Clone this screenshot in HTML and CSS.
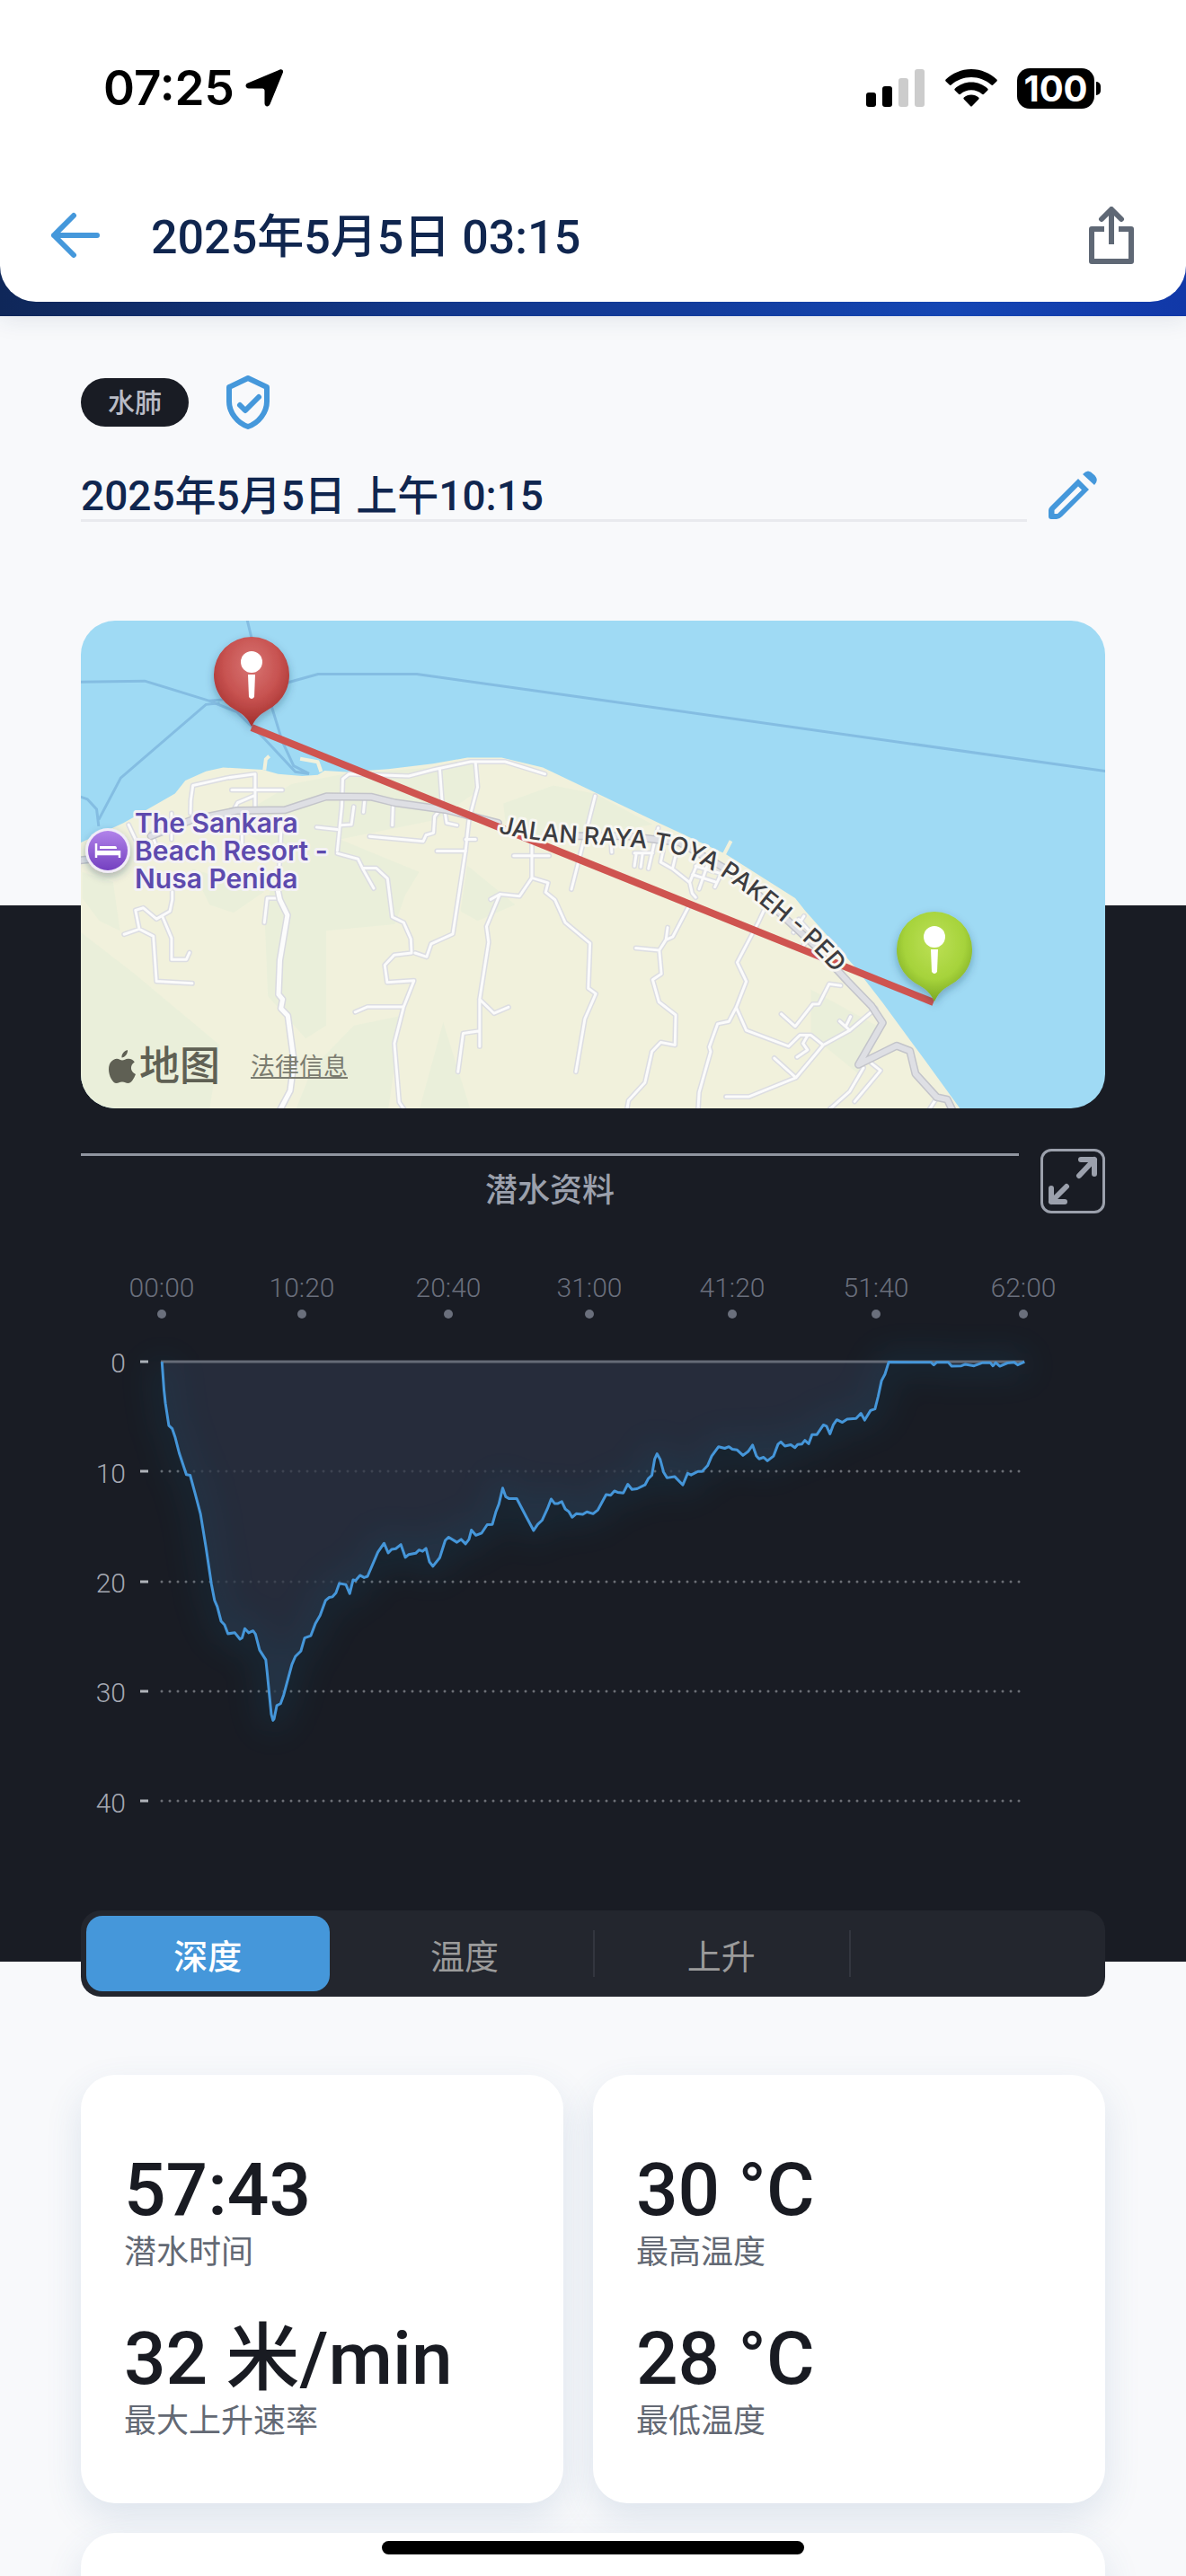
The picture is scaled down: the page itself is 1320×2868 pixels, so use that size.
FILE: index.html
```html
<!DOCTYPE html>
<html lang="zh-CN">
<head>
  <meta charset="UTF-8" />
  <meta name="viewport" content="width=device-width, initial-scale=1.0" />
  <title>2025年5月5日 03:15</title>
  <link rel="stylesheet" href="styles.css">
</head>
<body>
  <div class="hero">
    <header class="header">
      <div class="status-bar">
        <div class="status-left">
          <span class="clock">07:25</span>
          <svg width="42" height="42" viewBox="0 0 42 42"><path d="M38 .8 C40.500 -.6 42.800 1.200 41.800 4 L27.500 39 C26 42.600 21.500 42 21.500 38 V24 C21.500 22.500 20.500 21.500 19 21.500 H4 C0 21.500 -.8 17 2.800 15.500 Z"/></svg>
        </div>
        <div class="status-right">
          <svg width="66" height="42" viewBox="0 0 66 42">
            <rect x="0" y="26" width="11" height="16" rx="3"/>
            <rect x="18" y="19" width="11" height="23" rx="3"/>
            <rect x="36" y="10" width="11" height="32" rx="3" fill="#ccc"/>
            <rect x="54" y="0" width="11" height="42" rx="3" fill="#ccc"/>
          </svg>
          <svg width="58" height="42" viewBox="0 0 58 42">
            <path d="M29 0 C40 0 50 4.500 57.400 11.500 Q58.200 12.500 57.400 13.400 L53.200 17.600 Q52.200 18.300 51.300 17.500 C45 12 37.500 9 29 9 C20.500 9 13 12 6.700 17.500 Q5.800 18.300 4.800 17.600 L.6 13.400 Q-.2 12.500 .6 11.500 C8 4.500 18 0 29 0Z"/>
            <path d="M29 14.500 C36 14.500 42.500 17.200 47.300 21.700 Q48.200 22.700 47.300 23.600 L43 27.800 Q42 28.600 41 27.700 C37.700 24.900 33.500 23.300 29 23.300 C24.500 23.300 20.300 24.900 17 27.700 Q16 28.600 15 27.800 L10.700 23.600 Q9.800 22.700 10.700 21.700 C15.500 17.200 22 14.500 29 14.500Z"/>
            <path d="M29 28.500 C32 28.500 35 29.700 37.200 31.600 Q38.200 32.500 37.200 33.500 L30 41 Q29 42 28 41 L20.800 33.500 Q19.800 32.500 20.800 31.600 C23 29.700 26 28.500 29 28.500Z"/>
          </svg>
          <div class="battery"><span>100</span></div>
        </div>
      </div>
      <div class="nav">
        <button class="icon-button" aria-label="返回">
          <svg width="56" height="52" viewBox="0 0 56 52" fill="none" stroke="#4598db" stroke-width="6" stroke-linecap="round" stroke-linejoin="round"><path d="M26 4 L4 26 L26 48 M4 26 H52"/></svg>
        </button>
        <h1>2025年5月5日 03:15</h1>
        <button class="icon-button share" aria-label="分享">
          <svg width="50" height="64" viewBox="0 0 50 64" fill="none" stroke="#5f6875" stroke-width="6" stroke-linejoin="round"><path d="M17 25 H3 V61 H47 V25 H33 M25 42 V6"/><path d="M14 14 L25 3 L36 14" stroke-linecap="round"/></svg>
        </button>
      </div>
    </header>
  </div>

  <section class="details">
    <div class="tags">
      <span class="badge">水肺</span>
      <svg width="48" height="60" viewBox="0 0 48 60" fill="none" stroke="#4598db" stroke-width="6" stroke-linejoin="round" stroke-linecap="round"><path d="M24 3 L45 13 V29 C45 41 36 53 24 57 C12 53 3 41 3 29 V13 Z"/><path d="M15 33 L21 39 L36 24"/></svg>
    </div>
    <div class="title-row">
      <h2>2025年5月5日 上午10:15</h2>
      <button class="icon-button" aria-label="编辑">
        <svg width="54" height="54" viewBox="0 0 54 54"><path fill="#4598db" fill-rule="evenodd" d="M33 9 L45 21 L15 51 Q12 54 9 54 H3 Q0 54 0 51 V44 Q0 42 2 40 Z M33 17.500 L6.500 44 V48 H10 L37 21.500 Z"/><path fill="#4598db" d="M38 4 Q44 -3 50 4 Q57 10 51 16 Z"/></svg>
      </button>
    </div>
  </section>

  <section class="dive">
    <div class="map">
      <svg class="map-canvas" viewBox="0 0 1140 543" preserveAspectRatio="xMidYMid slice">
        <defs>
          <radialGradient id="redPin" cx="50%" cy="32%" r="62%"><stop offset="0" stop-color="#d87573"/><stop offset=".6" stop-color="#c75250"/><stop offset="1" stop-color="#a83432"/></radialGradient>
          <radialGradient id="greenPin" cx="50%" cy="35%" r="62%"><stop offset="0" stop-color="#bce056"/><stop offset=".65" stop-color="#a6d33b"/><stop offset="1" stop-color="#7fad25"/></radialGradient>
          <linearGradient id="hotel" x1="0" y1="0" x2="0" y2="1"><stop offset="0" stop-color="#b183ea"/><stop offset="1" stop-color="#7440c0"/></linearGradient>
          <filter id="shadow" x="-40%" y="-40%" width="180%" height="180%"><feDropShadow dx="0" dy="4" stdDeviation="5" flood-color="#1d3c55" flood-opacity=".35"/></filter>
          <path id="road" d="M464 236 C500 245 530 247 565 249 S640 252 669 262 S735 297 783 338 S830 382 870 430"/>
          <path id="pin" d="M0 -42 A42 42 0 0 1 42 0 C42 20 30 33 17 40 C8 45 4 50 0 58 C-4 50 -8 45 -17 40 C-30 33 -42 20 -42 0 A42 42 0 0 1 0 -42Z"/>
          <g id="lanes">
            <path d="M345 620 L346 580 L352 535 L450 512 L533 500 V610 M465 549 H612 M470 612 L482 588 L533 565"/>
            <path d="M772 735 L785 600 L788 515 L806 500 L980 506 L1050 487 L1160 462 L1260 462 L1376 500 M1174 465 L1180 540 L1155 640 L1145 735 L1108 990 L1045 1020 L1032 1060 L998 1048"/>
            <path d="M1070 485 L1078 600 L1055 630 L1052 680 L1030 687 L1022 706 L866 691 M852 575 L848 617 M934 600 L932 657 M820 600 L813 655 L782 657 M712 663 L772 670 M1085 615 L1090 650 L1120 657 M1145 700 H1174 M1062 736 H1145"/>
            <path d="M772 743 L832 760 L846 790 L878 850 M846 788 H885 L918 820 L932 938 L965 955 L986 1005 L988 1048 L938 1054 L910 1085 L917 1138 L995 1133 L965 1213 L938 1325 L952 1505 L968 1530 M824 1229 L860 1213 H962"/>
            <path d="M1338 700 V818 L1302 874 L1245 868 L1218 884 M1285 750 H1388 M1338 818 L1385 833 L1378 862 L1405 885 L1435 955 L1507 1018 L1502 1156 L1524 1173 L1492 1250 L1466 1412 M1245 868 L1206 967 L1212 1015 L1186 1190 V1334 M1186 1190 L1228 1233 L1270 1214 M1186 1287 L1138 1294 L1123 1412"/>
            <path d="M1522 567 L1453 853 M292 860 V885 L285 920 L246 944 L208 910 L185 917 L196 975 L152 991 M196 975 L237 997 L246 1135 L350 1141 M264 938 L290 1003 V1068 H333 L342 1047 M600 880 H568 L560 955 M165 655 L185 700 M232 680 L245 720 M290 620 V700 M495 630 V730 M610 640 L600 860"/>
            <g transform="translate(1463.500 0) scale(1.01667 1)">
              <path d="M238 665 L225 720 L210 790 M175 745 L170 782 M193 745 L188 785 M170 742 H222 M252 735 L245 770 L278 790 L328 832 M290 740 L280 785 M348 780 L328 832 L335 865 L345 878 M345 782 L418 805 L400 846 M336 808 L400 830 M380 775 L355 852 M104 720 L105 740"/>
              <path d="M328 900 L280 998 L260 1008 L241 1040 L174 1033 M265 970 L260 1008 M241 1040 L247 1112 L222 1130 L240 1198 L288 1238 L286 1330 L245 1322 L220 1350 L200 1445 L153 1500 L148 1530"/>
              <path d="M548 900 L524 955 L464 1077 L490 1135 L461 1215 L490 1285 L611 1334 L643 1300 H675 L710 1330 L632 1430 L570 1370 M632 1430 L498 1488 H432 M710 1330 L786 1285 L860 1218 M786 1285 L757 1257 M775 1272 L788 1243 M666 1300 L652 1325 L665 1345 L635 1367 M461 1215 L440 1258 L408 1265 L384 1336 L388 1350 L355 1475 L352 1530"/>
              <path d="M590 1235 L630 1273 L680 1205 L698 1204 L727 1143 L760 1148 M825 1400 L785 1473 L730 1525 M848 1386 L874 1408 L800 1503 M1035 1492 L1015 1525 M655 935 L625 985 M683 985 L650 1030 M640 945 L720 1040"/>
            </g>
          </g>
          <g id="major">
            <path d="M20 765 L100 755 M230 690 L350 640 L480 612 L620 610 L740 569 L870 570 L940 588 L1090 610 L1240 650"/>
            <path transform="translate(1463.500 0) scale(1.01667 1)" d="M0 690 L150 690 L300 710 L430 790 L560 900 L690 1030 L780 1135 L848 1210 L880 1262 L811 1390 L920 1332 L958 1348 L974 1418 L1035 1490 L1065 1497 L1080 1530"/>
          </g>
          <path id="south" d="M600 860 L605 885 L627 932 L605 1070 L601 1175 L613 1190 L608 1218 L628 1240 L646 1380 L635 1470 L605 1530"/>
        </defs>
        <rect width="1140" height="543" fill="#9fdaf4"/>
        <g transform="translate(-10 -11) scale(.38265 .36352)">
          <g class="ferry">
            <path d="M20 218 L212 215 L400 276 L440 272 M508 20 L523 85 M78 640 L142 512 L390 287 L430 283 M20 568 L45 577 L72 608 L78 660"/>
            <path d="M400 276 L480 310 L560 392 L650 493 L690 499 M580 290 L612 400 L645 475 L690 499 M620 222 L716 194 L1003 194 L1463 262 L3010 492"/>
          </g>
          <path fill="#f1f1dc" d="M20 713 L150 650 L180 632 L250 590 L300 560 L330 520 L390 492 L440 480 L555 487 L600 500 L670 506 L715 503 L735 490 L800 494 L920 485 L1050 468 L1150 450 L1250 450 L1370 480 L1463 527 L1707 650 L1901 745 L2104 880 L2134 920 L2277 1090 L2358 1200 L2480 1375 L2587 1530 H20Z"/>
          <g class="green">
            <path d="M640 530 L790 500 L1170 470 L1170 560 L1060 640 L780 700 L1010 800 L970 870 L940 960 L740 980 L740 1270 L680 1310 L570 1180 L560 920 L610 740 L450 650Z"/>
            <path d="M1255 590 L1400 535 L1520 560 L1690 655 L1600 670 L1350 700 L1260 640Z M30 800 L120 830 L140 980 L80 950 L30 880Z"/>
            <path d="M20 980 L180 1110 L430 1330 L400 1530 H20Z M820 1270 L960 1240 L920 1530 H650 L700 1400Z M1080 1260 L1160 1530 H1010Z M350 790 L560 860 L470 925 L400 900Z"/>
            <path d="M2150 1160 L2340 1270 L2290 1420 L2150 1300Z M1290 900 L1180 950 L1130 920 L1150 780Z"/>
          </g>
          <path class="jetty" d="M560 488 L564 455 L574 445 M664 453 L715 463 L725 493 M1895 750 L1917 705"/>
          <g class="roads">
            <use href="#lanes" class="lane-edge"/>
            <use href="#lanes" class="lane-fill"/>
            <use href="#major" class="major-edge"/>
            <use href="#major" class="major-fill"/>
            <use href="#south" class="south-edge"/>
            <use href="#south" class="south-fill"/>
          </g>
        </g>

        <path d="M190 119 L949 425" stroke="#cf5450" stroke-width="8"/>
        <text class="road-name"><textPath href="#road">JALAN RAYA TOYA PAKEH - PED</textPath></text>

        <g filter="url(#shadow)"><circle cx="30" cy="256" r="25" fill="#f1ecf8"/></g>
        <circle cx="30" cy="256" r="22" fill="url(#hotel)"/>
        <path d="M17 248 V264 M17 260 H43 M43 264 V256" stroke="#fff" stroke-width="2.500" fill="none"/>
        <path d="M18 256 H43 V260 H18Z M21 251 H38 Q40 251 40 254 H21Z" fill="#fff"/>
        <text class="place"><tspan x="60" y="236">The Sankara</tspan><tspan x="60" y="267">Beach Resort -</tspan><tspan x="60" y="298">Nusa Penida</tspan></text>

        <g transform="translate(190 60)">
          <use href="#pin" fill="url(#redPin)" filter="url(#shadow)"/>
          <circle cy="-14" r="12" fill="#fff"/><path d="M-4 0 H4 L3 25 Q0 29 -3 25Z" fill="#fff"/>
        </g>
        <g transform="translate(950 366)">
          <use href="#pin" fill="url(#greenPin)" filter="url(#shadow)"/>
          <circle cy="-14" r="12" fill="#fff"/><path d="M-4 0 H4 L3 25 Q0 29 -3 25Z" fill="#fff"/>
        </g>
      </svg>
      <div class="attribution">
        <svg width="30" height="38" viewBox="0 0 30 38" fill="#5f6054"><path d="M21 0 C21.500 4 18 8.500 14.500 8.500 C14 4.500 17.500 .8 21 0Z M15 11.500 C17 11.500 19 9.500 22 9.700 C25 9.800 27.500 11.200 28.800 13.500 C23 17 24 24.500 30 27 C28 32 25 37 21.500 37 C19 37 18 35.500 15 35.500 C12 35.500 11 37 8.500 37 C4.500 37 0 29 0 21.500 C0 14 4.500 10 9 9.700 C11.500 9.700 13.500 11.500 15 11.500Z"/></svg>
        <span>地图</span>
        <a href="#">法律信息</a>
      </div>
    </div>

    <div class="chart-header">
      <h3>潜水资料</h3>
      <button class="expand" aria-label="全屏">
        <svg width="56" height="56" viewBox="0 0 56 56" fill="none" stroke="#9ba0ac" stroke-width="6" stroke-linecap="round" stroke-linejoin="round"><path d="M35 22 L52 4 M37 4 H52 V20 M21 34 L4 51 M4 36 V51 H19"/></svg>
      </button>
    </div>

    <svg class="chart" viewBox="0 0 1140 660">
      <defs>
        <filter id="glow" x="-10%" y="-20%" width="120%" height="140%"><feGaussianBlur stdDeviation="45"/></filter>
        <path id="dive" d="M262 101 L268 190 L272 230 L282 300 L292 310 L300 335 L312 385 L333 453 L344 455 L358 510 L374 575 L390 680 L406 795 L415 845 L423 865 L434 910 L444 921 L454 949 L474 946 L489 966 L495 962 L503 933 L514 946 L527 940 L534 950 L546 1000 L564 1030 L568 1070 L580 1200 L585 1219 L588 1215 L596 1173 L607 1167 L616 1140 L640 1045 L650 1020 L666 1003 L677 962 L695 955 L708 918 L722 892 L738 845 L748 836 L758 834 L768 822 L778 792 L797 796 L808 824 L818 781 L825 783 L838 767 L850 774 L860 770 L890 695 L908 667 L920 697 L930 686 L942 684 L957 671 L970 711 L980 702 L1000 698 L1010 688 L1020 692 L1030 683 L1040 725 L1050 739 L1070 712 L1086 658 L1096 648 L1120 664 L1132 655 L1145 669 L1155 655 L1162 626 L1175 642 L1192 635 L1208 609 L1223 608 L1233 570 L1242 545 L1253 495 L1262 522 L1272 528 L1294 528 L1322 585 L1343 627 L1355 608 L1368 595 L1383 560 L1394 529 L1404 543 L1414 543 L1425 537 L1435 560 L1445 568 L1455 586 L1467 575 L1486 577 L1498 569 L1516 575 L1530 563 L1554 515 L1567 517 L1578 504 L1587 508 L1604 510 L1617 483 L1629 499 L1644 497 L1667 485 L1677 465 L1687 455 L1695 405 L1702 388 L1711 405 L1721 445 L1731 463 L1753 459 L1777 485 L1791 449 L1801 454 L1821 443 L1833 443 L1849 425 L1861 395 L1881 366 L1899 371 L1911 366 L1921 374 L1935 376 L1952 393 L1967 381 L1980 361 L1991 395 L1999 404 L2012 399 L2023 410 L2041 395 L2054 358 L2062 351 L2074 364 L2091 360 L2103 369 L2111 359 L2123 358 L2132 346 L2143 357 L2153 328 L2167 328 L2186 298 L2195 302 L2205 326 L2215 297 L2225 282 L2241 290 L2255 280 L2281 278 L2295 262 L2306 283 L2323 253 L2336 248 L2345 210 L2355 160 L2365 140 L2376 102 L2499 103 L2507 111 L2515 103 L2549 103 L2559 115 L2587 114 L2599 109 L2624 114 L2649 104 L2671 104 L2679 114 L2687 104 L2699 115 L2721 105 L2741 103 L2751 111 L2771 101"/>
      </defs>
      <g class="time">
        <text x="90" y="34">00:00</text><text x="246" y="34">10:20</text><text x="409" y="34">20:40</text><text x="566" y="34">31:00</text><text x="725" y="34">41:20</text><text x="885" y="34">51:40</text><text x="1049" y="34">62:00</text>
        <circle cx="90" cy="53" r="5"/><circle cx="246" cy="53" r="5"/><circle cx="409" cy="53" r="5"/><circle cx="566" cy="53" r="5"/><circle cx="725" cy="53" r="5"/><circle cx="885" cy="53" r="5"/><circle cx="1049" cy="53" r="5"/>
      </g>
      <g class="depth">
        <text x="50" y="118">0</text><text x="50" y="241">10</text><text x="50" y="363">20</text><text x="50" y="485">30</text><text x="50" y="608">40</text>
        <path d="M66 106 H75 M66 228 H75 M66 351 H75 M66 473 H75 M66 595 H75"/>
      </g>
      <path class="grid" d="M90 228 H1046 M90 351 H1046 M90 473 H1046 M90 595 H1046"/>
      <g transform="translate(-10 70) scale(.38265 .35714)">
        <use href="#dive" class="area"/>
        <use href="#dive" class="glow" filter="url(#glow)"/>
      </g>
      <path class="zero" d="M89 106 H1050"/>
      <g transform="translate(-10 70) scale(.38265 .35714)"><use href="#dive" class="line"/></g>
    </svg>

    <div class="tabs">
      <button class="tab active">深度</button>
      <button class="tab">温度</button>
      <button class="tab">上升</button>
      <button class="tab" aria-label="更多"></button>
    </div>
  </section>

  <section class="stats">
    <div class="card">
      <div class="value">57:43</div>
      <div class="label">潜水时间</div>
      <div class="value">32 米/min</div>
      <div class="label">最大上升速率</div>
    </div>
    <div class="card">
      <div class="value">30 °C</div>
      <div class="label">最高温度</div>
      <div class="value">28 °C</div>
      <div class="label">最低温度</div>
    </div>
    <div class="card next"></div>
  </section>
  <div class="home-indicator"></div>
</body>
</html>
```

FILE: styles.css
```css
* {
  box-sizing: border-box;
}
html {
  height: 100%;
  overflow: hidden;
}
body {
  margin: 0;
  height: 100%;
  overflow: hidden;
  position: relative;
  background: #f8f9fb;
  font-family: Roboto, "Noto Sans CJK SC", sans-serif;
}
h1, h2, h3 {
  margin: 0;
  font-weight: 500;
}
svg {
  display: block;
  flex: none;
}
button {
  border: none;
  background: none;
  padding: 0;
  font-family: inherit;
  cursor: pointer;
}

/* header */
.hero {
  padding-bottom: 16px;
  background: linear-gradient(90deg, #0f2759 0%, #12378a 35%, #123c9c 58%, #1446b4 80%, #1138a8 100%);
  box-shadow: 0 4px 24px rgba(30, 60, 100, 0.1);
}
.header {
  height: 336px;
  background: #fff;
  border-radius: 0 0 40px 40px;
}
.status-bar {
  height: 196px;
  padding: 0 95px 0 115px;
  display: flex;
  justify-content: space-between;
  align-items: center;
}
.status-left, .status-right {
  display: flex;
  align-items: center;
}
.status-left {
  gap: 12px;
}
.status-right {
  gap: 22px;
}
.clock {
  font: 600 53px/60px Inter, sans-serif;
  color: #000;
}
.battery {
  position: relative;
  width: 86px;
  height: 45px;
  margin-right: 7px;
  border-radius: 14px;
  background: #000;
  color: #fff;
  font: 700 40px/45px Inter, sans-serif;
  text-align: center;
}
.battery::after {
  content: "";
  position: absolute;
  right: -7px;
  top: 15px;
  width: 5px;
  height: 15px;
  border-radius: 0 5px 5px 0;
  background: #000;
}
.nav {
  height: 132px;
  padding: 0 58px 0 56px;
  display: flex;
  align-items: center;
}
.nav h1 {
  flex: 1;
  margin-left: 56px;
  padding-top: 6px;
  font-size: 52px;
  line-height: 64px;
  color: #10264f;
}

/* dive title */
.details {
  padding: 66px 90px 427px;
}
.tags {
  display: flex;
  align-items: center;
  gap: 42px;
}
.badge {
  width: 120px;
  height: 54px;
  border-radius: 27px;
  background: #191c24;
  color: #b9bcc6;
  font-size: 30px;
  line-height: 56px;
  font-weight: 500;
  text-align: center;
}
.title-row {
  margin-top: 43px;
  display: flex;
  align-items: center;
  gap: 24px;
  padding-right: 9px;
}
.title-row h2 {
  flex: 1;
  height: 60px;
  font-size: 46px;
  line-height: 62px;
  color: #10264f;
  border-bottom: 3px solid #e9eaee;
}

/* map and profile */
.dive {
  background: #191c24;
  padding: 0 90px;
}
.map {
  position: relative;
  top: -317px;
  margin-bottom: -317px;
  height: 543px;
  border-radius: 38px;
  overflow: hidden;
}
.map-canvas {
  width: 100%;
  height: 100%;
}
.map path {
  vector-effect: non-scaling-stroke;
}
.ferry {
  fill: none;
  stroke: #84bde2;
  stroke-width: 3;
}
.green {
  fill: #e6efd9;
  opacity: 0.6;
}
.jetty {
  fill: none;
  stroke: #f1f1dc;
  stroke-width: 4;
}
.roads {
  fill: none;
  stroke-linejoin: round;
  stroke-linecap: round;
}
.lane-edge {
  stroke: #dcdde2;
  stroke-width: 6;
}
.lane-fill {
  stroke: #fbfbfb;
  stroke-width: 3;
}
.major-edge {
  stroke: #c3c4ca;
  stroke-width: 9;
}
.major-fill {
  stroke: #dedfe4;
  stroke-width: 6;
}
.south-edge {
  stroke: #d9dae0;
  stroke-width: 8;
}
.south-fill {
  stroke: #fcfcfc;
  stroke-width: 5;
}
.road-name {
  font: 500 27px Inter, sans-serif;
  fill: #3c3c40;
  stroke: #f8f7f2;
  stroke-width: 6;
  stroke-linejoin: round;
  paint-order: stroke;
}
.place {
  font: 600 30px Inter, sans-serif;
  fill: #5d4aae;
  stroke: #f4f2f5;
  stroke-width: 6;
  stroke-linejoin: round;
  paint-order: stroke;
}
.attribution {
  position: absolute;
  left: 31px;
  bottom: 18px;
  display: flex;
  align-items: center;
  gap: 4px;
  color: #5f6054;
  font-size: 45px;
  font-weight: 500;
  line-height: 56px;
}
.attribution a {
  margin-left: 30px;
  color: #7b7c70;
  font-size: 27px;
  font-weight: 400;
}
.chart-header {
  display: flex;
  align-items: flex-start;
  gap: 24px;
  padding-top: 45px;
}
.chart-header h3 {
  flex: 1;
  margin-top: 5px;
  border-top: 3px solid #9095a0;
  padding-top: 14px;
  font-size: 36px;
  line-height: 50px;
  text-align: center;
  color: #9ba0ac;
}
.expand {
  width: 72px;
  height: 72px;
  border: 3px solid #9ba0ac;
  border-radius: 12px;
  display: flex;
  align-items: center;
  justify-content: center;
}
.chart {
  width: 100%;
  margin-top: 59px;
}
.chart path {
  vector-effect: non-scaling-stroke;
}
.time {
  fill: #6a6f7c;
  font-size: 30px;
  font-weight: 300;
  text-anchor: middle;
}
.depth {
  fill: #a4a8b2;
  font-size: 30px;
  font-weight: 300;
  text-anchor: end;
}
.depth path {
  stroke: #b0b3ba;
  stroke-width: 3;
}
.grid {
  stroke: #6b6e75;
  stroke-width: 3;
  stroke-linecap: round;
  stroke-dasharray: 0 9;
}
.area {
  fill: #2b3344;
  opacity: 0.72;
}
.zero {
  stroke: #656b77;
  stroke-width: 3;
}
.line, .glow {
  fill: none;
  stroke: #4596d9;
  stroke-width: 3;
  stroke-linejoin: round;
}
.glow {
  stroke: #16506c;
  stroke-width: 26;
  opacity: 0.22;
}
.tabs {
  position: relative;
  top: 39px;
  margin-top: 18px;
  height: 96px;
  padding: 6px;
  display: flex;
  border-radius: 22px;
  background: #23262e;
}
.tab {
  position: relative;
  flex: 1;
  margin-right: 15px;
  border-radius: 18px;
  font-size: 38px;
  color: #9b9b9b;
}
.tab:last-child {
  margin-right: 0;
}
.tab.active {
  background: #4597da;
  color: #fff;
  font-weight: 500;
}
.tab:nth-child(n+3)::before {
  content: "";
  position: absolute;
  left: -8px;
  top: 16px;
  height: 52px;
  border-left: 2px solid #33363f;
}

/* stats */
.stats {
  display: grid;
  grid-template-columns: 537fr 570fr;
  gap: 33px;
  padding: 126px 90px 0;
}
.card {
  padding: 80px 48px 69px;
  border-radius: 38px;
  background: #fff;
  box-shadow: 0 16px 40px rgba(60, 100, 150, 0.14);
}
.card.next {
  grid-column: 1 / -1;
  height: 200px;
}
.value {
  font-size: 82px;
  line-height: 96px;
  font-weight: 500;
  color: #191b22;
  white-space: nowrap;
}
.label {
  margin-bottom: 48px;
  font-size: 36px;
  line-height: 44px;
  color: #636974;
}
.label:last-child {
  margin-bottom: 0;
}
.home-indicator {
  position: absolute;
  left: 50%;
  bottom: 24px;
  width: 470px;
  height: 15px;
  margin-left: -235px;
  border-radius: 8px;
  background: #000;
}
```
